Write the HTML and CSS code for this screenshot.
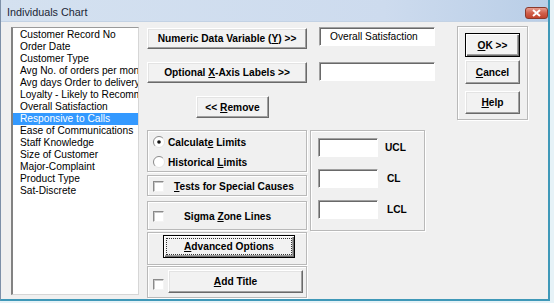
FILE: index.html
```html
<!DOCTYPE html>
<html>
<head>
<meta charset="utf-8">
<title>Individuals Chart</title>
<link rel="stylesheet" href="styles.css">
</head>
<body>
<div class="window">
  <div class="titlebar">
    <span class="title">Individuals Chart</span>
    <span class="close"><svg width="11" height="8" viewBox="0 0 11 8"><path d="M2 1 L9 7 M9 1 L2 7" stroke="#fff" stroke-width="2"/></svg></span>
  </div>
  <div class="client">
    <div class="listbox">
      <div class="item">Customer Record No</div>
      <div class="item">Order Date</div>
      <div class="item">Customer Type</div>
      <div class="item">Avg No. of orders per month</div>
      <div class="item">Avg days Order to delivery</div>
      <div class="item">Loyalty - Likely to Recommend</div>
      <div class="item">Overall Satisfaction</div>
      <div class="item selected">Responsive to Calls</div>
      <div class="item">Ease of Communications</div>
      <div class="item">Staff Knowledge</div>
      <div class="item">Size of Customer</div>
      <div class="item">Major-Complaint</div>
      <div class="item">Product Type</div>
      <div class="item">Sat-Discrete</div>
    </div>

    <div class="center">
      <div class="row row-first">
        <button class="btn btn-var"><span>Numeric Data Variable (<u>Y</u>) &gt;&gt;</span></button>
        <div class="field">Overall Satisfaction</div>
      </div>
      <div class="row row-second">
        <button class="btn btn-var"><span>Optional <u>X</u>-Axis Labels &gt;&gt;</span></button>
        <div class="field"></div>
      </div>
      <div class="row row-remove">
        <button class="btn btn-remove"><span>&lt;&lt; <u>R</u>emove</span></button>
      </div>

      <div class="options">
        <div class="stack">
          <div class="group g-radio">
            <div class="radio-row">
              <svg class="radio" width="12" height="12" viewBox="0 0 12 12">
                <circle cx="6" cy="6" r="5.5" fill="#fff"/>
                <path d="M2.1 9.9 A5.5 5.5 0 0 1 9.9 2.1" stroke="#8a8a8a" fill="none"/>
                <path d="M9.9 2.1 A5.5 5.5 0 0 1 2.1 9.9" stroke="#e3e3e3" fill="none"/>
                <circle cx="6" cy="6" r="1.8" fill="#111"/>
              </svg>
              <span class="lbl">Calculat<u>e</u> Limits</span>
            </div>
            <div class="radio-row">
              <svg class="radio" width="12" height="12" viewBox="0 0 12 12">
                <circle cx="6" cy="6" r="5.5" fill="#fff"/>
                <path d="M2.1 9.9 A5.5 5.5 0 0 1 9.9 2.1" stroke="#8a8a8a" fill="none"/>
                <path d="M9.9 2.1 A5.5 5.5 0 0 1 2.1 9.9" stroke="#e3e3e3" fill="none"/>
              </svg>
              <span class="lbl">Historical <u>L</u>imits</span>
            </div>
          </div>
          <div class="group g-tests">
            <span class="check"></span>
            <span class="lbl tests-lbl"><u>T</u>ests for Special Causes</span>
          </div>
          <div class="group g-sigma">
            <span class="check"></span>
            <span class="lbl sigma-lbl">Sigma <u>Z</u>one Lines</span>
          </div>
          <div class="group g-adv">
            <button class="btn btn-default btn-adv"><span class="focus"><span><u>A</u>dvanced Options</span></span></button>
          </div>
          <div class="group g-title">
            <span class="check"></span>
            <button class="btn btn-title"><span><u>A</u>dd Title</span></button>
          </div>
        </div>

        <div class="group limits">
          <div class="limit-row"><div class="field small"></div><span class="lbl">UCL</span></div>
          <div class="limit-row"><div class="field small"></div><span class="lbl lbl-cl">CL</span></div>
          <div class="limit-row"><div class="field small"></div><span class="lbl lbl-cl">LCL</span></div>
        </div>
      </div>
    </div>

    <div class="group actions">
      <button class="btn btn-default btn-ok"><span><u>O</u>K &gt;&gt;</span></button>
      <button class="btn btn-cancel"><span><u>C</u>ancel</span></button>
      <button class="btn btn-help"><span><u>H</u>elp</span></button>
    </div>
  </div>
</div>
</body>
</html>
```

FILE: styles.css
```css
* {
  box-sizing: border-box;
  margin: 0;
  padding: 0;
}

html, body {
  width: 554px;
  height: 303px;
  overflow: hidden;
}

body {
  background: #e6f2f7;
  font-family: "Liberation Sans", Arial, sans-serif;
  font-size: 10.2px;
  color: #000;
}

.window {
  width: 550px;
  height: 301px;
  display: flex;
  flex-direction: column;
  background: #f0f0f0;
  border-left: 1px solid #7d90a8;
  border-right: 2px solid #3f98b8;
  border-bottom: 2px solid #3f98b8;
}

.titlebar {
  height: 22px;
  flex: none;
  display: flex;
  justify-content: space-between;
  align-items: flex-start;
  padding-left: 6px;
  background: linear-gradient(to right, #d4e1f0 0%, #cddbee 70%, #b9cee7 100%);
  border-bottom: 1px solid #c3d2e4;
}

.title {
  font-size: 10.8px;
  line-height: 12px;
  margin-top: 6px;
  color: #1b2636;
}

.close {
  width: 23px;
  height: 12px;
  margin-top: 7px;
  display: flex;
  align-items: center;
  justify-content: center;
  border: 1px solid #8a3a2c;
  border-radius: 3px;
  background: linear-gradient(to bottom, #e79c8f 0%, #d0604b 50%, #c2432c 100%);
}

.client {
  flex: 1;
  display: flex;
  align-items: flex-start;
  padding-left: 10px;
}

/* list box */
.listbox {
  width: 128px;
  height: 268px;
  margin-top: 5px;
  padding-top: 1px;
  background: #fff;
  border-style: solid;
  border-width: 1px 1px 1px 2px;
  border-color: #9a9a9a #d6d6d6 #d6d6d6 #828282;
  overflow: hidden;
}

.item {
  height: 12px;
  line-height: 12px;
  padding-left: 7px;
  white-space: nowrap;
  overflow: hidden;
}

.item.selected {
  background: #3399ff;
  color: #fff;
}

/* center block */
.center {
  width: 288px;
  margin-left: 8px;
  margin-top: 4px;
}

.row {
  display: flex;
  align-items: flex-start;
}

.row-first {
  height: 23px;
}

.row-first .btn {
  margin-top: 2px;
}

.row-first .field {
  margin-top: 1px;
}

.row-second {
  height: 21px;
  margin-top: 13px;
}

.row-remove {
  margin-top: 13px;
  padding-left: 49px;
}

/* buttons */
.btn {
  font: inherit;
  font-weight: bold;
  color: #000;
  background: #f2f2f2;
  display: flex;
  align-items: center;
  justify-content: center;
  white-space: nowrap;
  border-style: solid;
  border-width: 1px;
  border-color: #ffffff #6a6a6a #6a6a6a #ffffff;
  box-shadow: inset -1px -1px 0 #a0a0a0, inset 1px 1px 0 #e3e3e3;
}

.btn-var {
  width: 160px;
  height: 21px;
}

.btn-remove {
  width: 73px;
  height: 22px;
}

.btn-default {
  border: 1px solid #000;
  box-shadow: inset 1px 1px 0 #fff, inset -1px -1px 0 #6a6a6a, inset -2px -2px 0 #a0a0a0;
}

/* text fields */
.field {
  width: 116px;
  height: 19px;
  margin-left: 12px;
  background: #fff;
  border-style: solid;
  border-width: 1px;
  border-color: #a0a0a0 #ffffff #ffffff #a0a0a0;
  box-shadow: inset 1px 1px 0 #696969;
  padding-left: 10px;
  display: flex;
  align-items: center;
  white-space: nowrap;
}

/* options */
.options {
  display: flex;
  align-items: flex-start;
  margin-top: 12px;
}

.stack {
  width: 160px;
  display: flex;
  flex-direction: column;
}

.group {
  border: 1px solid #b9b9b9;
  box-shadow: inset 1px 1px 0 #fff, 1px 1px 0 #fff;
}

.lbl {
  font-weight: bold;
  white-space: nowrap;
}

.g-radio {
  height: 42px;
  padding-left: 5px;
  padding-top: 1px;
}

.radio-row {
  height: 20px;
  display: flex;
  align-items: center;
}

.radio-row .lbl {
  margin-left: 3px;
}

.check {
  width: 11px;
  height: 11px;
  flex: none;
  background: #fff;
  border-style: solid;
  border-width: 1px;
  border-color: #8a8a8a #f4f4f4 #f4f4f4 #8a8a8a;
  box-shadow: inset 1px 1px 0 #c8c8c8;
}

.g-tests {
  height: 21px;
  margin-top: 3px;
  padding-left: 5px;
  padding-top: 2px;
  display: flex;
  align-items: center;
}

.tests-lbl {
  margin-left: 10px;
}

.g-sigma {
  height: 29px;
  margin-top: 5px;
  padding-left: 5px;
  padding-top: 2px;
  display: flex;
  align-items: center;
}

.sigma-lbl {
  margin-left: 20px;
}

.g-adv {
  height: 33px;
  margin-top: 2px;
  padding-left: 15px;
  padding-top: 2px;
}

.btn-adv {
  width: 132px;
  height: 23px;
  padding: 3px;
}

.focus {
  flex: 1;
  align-self: stretch;
  display: flex;
  align-items: center;
  justify-content: center;
  outline: 1px dotted #333;
  outline-offset: 0;
}

.g-title {
  height: 32px;
  margin-top: 1px;
  padding-left: 5px;
  padding-top: 3px;
  display: flex;
  align-items: flex-start;
}

.g-title .check {
  margin-top: 9px;
}

.btn-title {
  width: 135px;
  height: 23px;
  margin-left: 4px;
}

/* limits */
.limits {
  width: 115px;
  height: 101px;
  margin-left: 3px;
  padding-left: 7px;
  padding-top: 7px;
  display: flex;
  flex-direction: column;
  gap: 12px;
}

.limit-row {
  display: flex;
  align-items: center;
}

.field.small {
  width: 60px;
  margin-left: 0;
}

.limit-row .lbl {
  margin-left: 7px;
}

.limit-row .lbl-cl {
  margin-left: 9px;
}

/* actions */
.actions {
  width: 71px;
  height: 94px;
  margin-left: 22px;
  margin-top: 4px;
  padding-left: 7px;
  padding-top: 6px;
  display: flex;
  flex-direction: column;
}

.actions .btn {
  width: 55px;
}

.btn-ok {
  height: 24px;
}

.btn-cancel {
  height: 24px;
  margin-top: 3px;
}

.btn-help {
  height: 23px;
  margin-top: 7px;
}
```
